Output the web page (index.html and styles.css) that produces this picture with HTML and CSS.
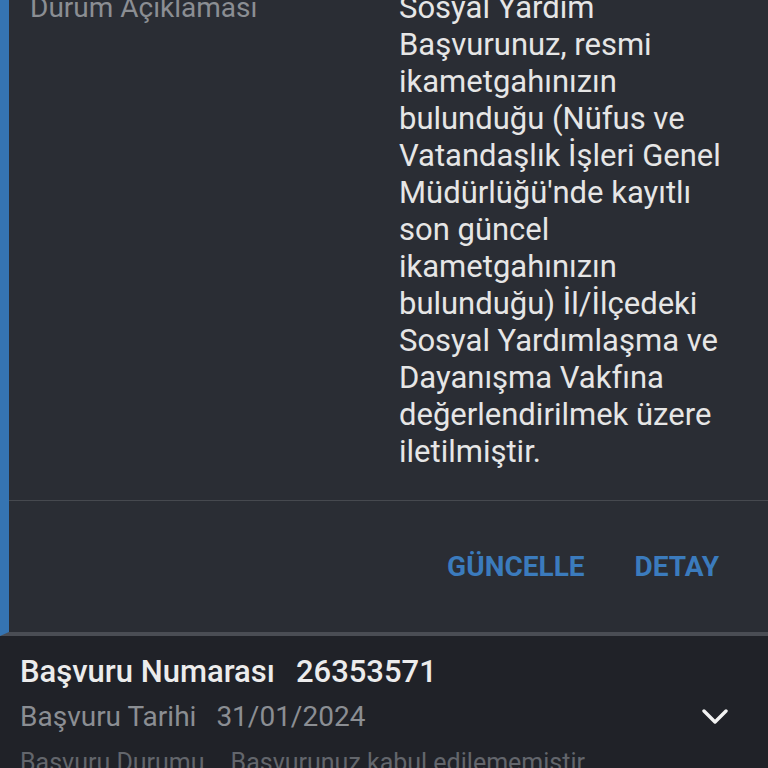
FILE: index.html
```html
<!DOCTYPE html>
<html>
<head>
  <title>Başvurularım</title>
  <link rel="stylesheet" href="styles.css">
</head>
<body>
  <div class="list">
    <div class="card open">
      <div class="field">
        <div class="field-label">Durum Açıklaması</div>
        <div class="field-value">Sosyal Yardım Başvurunuz, resmi ikametgahınızın bulunduğu (Nüfus ve Vatandaşlık İşleri Genel Müdürlüğü'nde kayıtlı son güncel ikametgahınızın bulunduğu) İl/İlçedeki Sosyal Yardımlaşma ve Dayanışma Vakfına değerlendirilmek üzere iletilmiştir.</div>
      </div>
      <div class="actions">
        <button class="action">GÜNCELLE</button>
        <button class="action">DETAY</button>
      </div>
    </div>

    <div class="card closed">
      <div class="row title"><span class="key">Başvuru Numarası</span><span>26353571</span></div>
      <div class="row">
        <span class="key">Başvuru Tarihi</span><span>31/01/2024</span>
        <svg class="chevron" width="26" height="16" viewBox="0 0 26 16">
          <path d="M2 2 L13 13 L24 2" fill="none" stroke="#f2f2f2" stroke-width="3.4" stroke-linecap="round" stroke-linejoin="round"/>
        </svg>
      </div>
      <div class="row dim"><span class="key">Başvuru Durumu</span><span>Başvurunuz kabul edilememiştir.</span></div>
    </div>
  </div>
</body>
</html>
```

FILE: styles.css
```css
body {
  margin: 0;
  height: 768px;
  overflow: hidden;
  font-family: Roboto, "Noto Sans", sans-serif;
  background-color: #202228;
  color: #e8e8e8;
}

.list {
  margin-top: -11px;
}

.card.open {
  background-color: #2a2d34;
  border-left: 9px solid #3574b2;
  border-bottom: 4px solid #4a4d54;
}

.field {
  display: flex;
  padding-bottom: 30px;
  border-bottom: 1px solid #46494f;
}

.field-label {
  width: 369px;
  padding-left: 21px;
  font-size: 28px;
  line-height: 37px;
  color: #8b8e93;
}

.field-value {
  width: 340px;
  font-size: 31px;
  line-height: 37px;
  color: #e6e6e6;
}

.actions {
  display: flex;
  justify-content: flex-end;
  align-items: center;
  gap: 50px;
  height: 131px;
  padding-right: 49px;
}

.action {
  border: none;
  background: none;
  padding: 0;
  font-family: Roboto, sans-serif;
  font-weight: bold;
  font-size: 28px;
  color: #3b7bbd;
}

.card.closed {
  padding: 13px 40px 0 20px;
}

.row {
  display: flex;
  align-items: center;
  gap: 20px;
  font-size: 28px;
  line-height: 46px;
  color: #8b8e93;
}

.row.title {
  font-weight: 500;
  font-size: 31px;
  line-height: 45px;
  color: #ececec;
  gap: 21px;
}

.row.dim {
  color: #63666c;
  font-size: 25px;
  gap: 26px;
}

.chevron {
  margin-left: auto;
}
```
